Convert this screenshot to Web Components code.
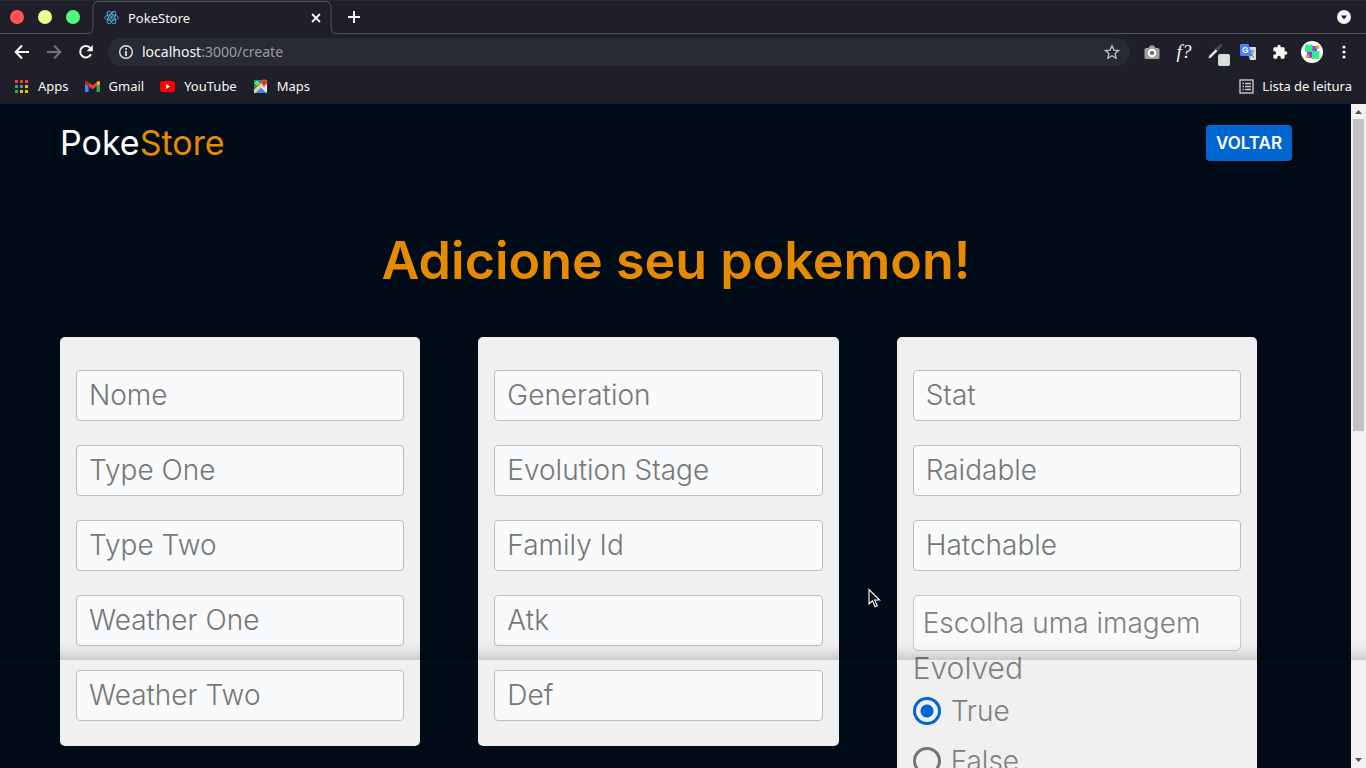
<!DOCTYPE html>
<html lang="pt-BR">
<head>
<meta charset="utf-8">
<title>PokeStore</title>
<style>
body { margin: 0; background: #000c17; }
</style>
</head>
<body>
<browser-window>
  <tab-strip slot="chrome" label="PokeStore"></tab-strip>
  <tool-bar slot="chrome" host="localhost" path=":3000/create"></tool-bar>
  <bookmark-bar slot="chrome"></bookmark-bar>
  <store-page>
    <store-header></store-header>
    <form-card fields="Nome,Type One,Type Two,Weather One,Weather Two" slot="cards"></form-card>
    <form-card fields="Generation,Evolution Stage,Family Id,Atk,Def" slot="cards"></form-card>
    <form-card fields="Stat,Raidable,Hatchable" slot="cards">
      <file-picker label="Escolha uma imagem"></file-picker>
      <radio-set label="Evolved" options="True,False"></radio-set>
    </form-card>
  </store-page>
</browser-window>

<script>
const reset = `
  :host, *, *::before, *::after { box-sizing: border-box; }
  svg { display: block; }
  button { font: inherit; color: inherit; background: none; border: 0; padding: 0; margin: 0; }
  a { color: inherit; text-decoration: none; }
`;
class Base extends HTMLElement {
  connectedCallback() {
    if (this.shadowRoot) return;
    this.attachShadow({ mode: 'open' }).innerHTML = `<style>${reset}${this.css()}</style>${this.html()}`;
  }
}

customElements.define('browser-window', class extends Base {
  css() { return `
    :host { display: flex; flex-direction: column; height: 100vh; overflow: hidden; position: relative;
      background: #1e1f29; color: #f8f8f2; font: 13px/20px "Noto Sans", sans-serif; }
    .view { flex: 1; min-height: 0; display: flex; background: #000c17; }
    .page { flex: 1; min-width: 0; overflow: hidden; }
    .shade { position: absolute; left: 0; right: 0; bottom: 108px; height: 20px; pointer-events: none;
      background: linear-gradient(to bottom, rgba(0,0,0,0), rgba(0,0,0,.04) 50%, rgba(0,0,0,.15)); }
    .cursor { position: absolute; left: 868px; top: 588px; pointer-events: none; }`; }
  html() { return `
    <slot name="chrome"></slot>
    <div class="view"><div class="page"><slot></slot></div><scroll-track></scroll-track></div>
    <div class="shade"></div>
    <svg class="cursor" width="13" height="20" viewBox="0 0 13 20"><path d="M1 1.5V16l3.5-3.2 2.6 6 2.2-1-2.6-5.8h5z" fill="#111" stroke="#fff" stroke-width="1.1"/></svg>`; }
});

customElements.define('scroll-track', class extends Base {
  css() { return `
    :host { display: flex; flex-direction: column; width: 15px; background: #f1f1f1; }
    .thumb { margin: 0 2px; height: 312px; background: #c1c1c1; }
    .space { flex: 1; }`; }
  html() { return `
    <svg width="15" height="15"><path d="M4 10h7L7.500 6z" fill="#505050"/></svg>
    <div class="thumb"></div><div class="space"></div>
    <svg width="15" height="15"><path d="M4 5h7L7.500 9z" fill="#505050"/></svg>`; }
});

customElements.define('tab-strip', class extends Base {
  css() { return `
    :host { display: flex; height: 34px; border-top: 1px solid #282a36; }
    .lights { display: flex; align-items: center; gap: 14px; width: 87px; padding-left: 10px; border-bottom: 1px solid #53555e; }
    .lights i { width: 14px; height: 14px; border-radius: 50%; background: var(--c); }
    .tab { position: relative; display: flex; align-items: center; width: 250px; padding: 0 14px 0 17px; }
    .tab .edge { position: absolute; inset: 0; }
    .name { flex: 1; padding-left: 9px; }
    .rest { flex: 1; display: flex; align-items: center; justify-content: space-between; padding: 0 14px 0 10px; border-bottom: 1px solid #53555e; }`; }
  html() { return `
    <div class="lights"><i style="--c:#ff5555"></i><i style="--c:#f1fa8c"></i><i style="--c:#50fa7b"></i></div>
    <div class="tab">
      <svg class="edge" width="250" height="33"><path d="M0 32.500q6 0 6-6V7q0-6.500 6-6.500h226q6 0 6 6.500v19.500q0 6 6 6" fill="none" stroke="#53555e"/></svg>
      <svg width="15" height="15" viewBox="0 0 15 15" fill="none" stroke="#56b9d2" stroke-width=".9"><ellipse cx="7.500" cy="7.500" rx="6.800" ry="2.700"/><ellipse cx="7.500" cy="7.500" rx="6.800" ry="2.700" transform="rotate(60 7.500 7.500)"/><ellipse cx="7.500" cy="7.500" rx="6.800" ry="2.700" transform="rotate(120 7.500 7.500)"/><circle cx="7.500" cy="7.500" r="1.300" fill="#56b9d2" stroke="none"/></svg>
      <span class="name">${this.getAttribute('label')}</span>
      <button aria-label="Fechar"><svg width="14" height="14"><path d="M3 3l8 8M11 3l-8 8" stroke="#f8f8f2" stroke-width="1.800"/></svg></button>
    </div>
    <div class="rest">
      <button aria-label="Nova guia"><svg width="14" height="14"><path d="M7 1v12M1 7h12" stroke="#f8f8f2" stroke-width="2"/></svg></button>
      <button aria-label="Pesquisar guias"><svg width="16" height="16"><circle cx="8" cy="8" r="7" fill="#f8f8f2"/><path d="M5 6.500h6L8 10.500z" fill="#1e1f29"/></svg></button>
    </div>`; }
});

customElements.define('tool-bar', class extends Base {
  css() { return `
    :host { display: flex; align-items: center; height: 36px; padding: 0 6px; }
    button { display: flex; justify-content: center; align-items: center; width: 32px; height: 28px; flex: none; }
    .omni { flex: 1; display: flex; align-items: center; height: 28px; margin: 0 6px; padding: 0 2px 0 10px; border-radius: 14px; background: #282a36; }
    .url { flex: 1; padding-left: 8px; color: #9a9ba0; font-size: 14px; }
    b { color: #f8f8f2; font-weight: 400; }
    .fn { font: italic 19px/20px "Liberation Serif", serif; }`; }
  html() { return `
    <button aria-label="Voltar"><svg width="16" height="16" fill="none" stroke="#f8f8f2" stroke-width="2"><path d="M15 8H2.500M8 1.500L1.700 8 8 14.500"/></svg></button>
    <button aria-label="Avançar"><svg width="16" height="16" fill="none" stroke="#727379" stroke-width="2"><path d="M1 8h12.500M8 1.500L14.300 8 8 14.500"/></svg></button>
    <button aria-label="Recarregar"><svg width="16" height="16"><path d="M13 10.200A5.700 5.700 0 1 1 12.400 4.200" fill="none" stroke="#f8f8f2" stroke-width="2"/><path d="M14.800 1v6.300H8.500z" fill="#f8f8f2"/></svg></button>
    <div class="omni">
      <svg width="16" height="16"><circle cx="8" cy="8" r="6.300" fill="none" stroke="#e4e4e0" stroke-width="1.400"/><path d="M8 4v1.800M8 7v5" stroke="#e4e4e0" stroke-width="1.800"/></svg>
      <span class="url"><b>${this.getAttribute('host')}</b>${this.getAttribute('path')}</span>
      <button aria-label="Favoritar"><svg width="16" height="16"><path d="M8 1.800l1.900 4.300 4.700.4-3.500 3.100 1 4.600L8 11.800l-4.100 2.400 1-4.600L1.400 6.500l4.700-.4z" fill="none" stroke="#c0c1c0" stroke-width="1.300"/></svg></button>
    </div>
    <button aria-label="Captura"><svg width="16" height="16"><rect x=".5" y="4" width="15" height="11" rx="1.500" fill="#a0a0a0"/><path d="M4.500 4l1.500-2.500h4L11.500 4z" fill="#a0a0a0"/><circle cx="8" cy="9" r="3.300" fill="#777" stroke="#fff" stroke-width="2"/></svg></button>
    <button aria-label="WhatFont"><span class="fn">f?</span></button>
    <button aria-label="Conta-gotas"><svg width="28" height="28"><path d="M7 18l7-7 1.800 1.800-7 7-2.300.5z" fill="#e8e8e4"/><path d="M12.500 10l2-.3L18 6.200q2-.8 2.500 1.300L16.500 12l-.3 2z" fill="#4c4c4c"/><rect x="16" y="16" width="12" height="12" rx="2" fill="#d6dfda"/><circle cx="22" cy="23" r="1" fill="#fff"/></svg></button>
    <button aria-label="Tradutor"><svg width="16" height="16"><path d="M6 3h9q1 0 1 1v11q0 1-1 1h-5z" fill="#d8dade"/><path d="M8.500 7h6M11.500 6v1.500M9.500 13c2-1.500 3.200-3 3.700-5.500M10.500 9c.8 2 2 3.300 3.500 4" fill="none" stroke="#6d7f8c"/><path d="M1 0h7.500L12.500 12H1q-1 0-1-1V1q0-1 1-1z" fill="#4385f5"/><path d="M7.600 4.700A2.500 2.500 0 1 0 8 6.400H5.500" fill="none" stroke="#fff" stroke-width="1.200"/></svg></button>
    <button aria-label="Extensões"><svg width="16" height="16" viewBox="0 0 24 24"><path d="M20.500 11H19V7c0-1.100-.9-2-2-2h-4V3.500a2.500 2.500 0 0 0-5 0V5H4c-1.100 0-2 .9-2 2v3.800h1.500a2.700 2.700 0 0 1 0 5.400H2V20c0 1.100.9 2 2 2h3.800v-1.500a2.700 2.700 0 0 1 5.400 0V22H17c1.100 0 2-.9 2-2v-4h1.500a2.500 2.500 0 0 0 0-5z" fill="#f8f8f2"/></svg></button>
    <button aria-label="Perfil"><svg width="22" height="22"><circle cx="11" cy="11" r="11" fill="#fff"/><path d="M6 11h5v6H6zM11 5h5v6h-5z" fill="#9d3ae0"/><path d="M4 3.500h7.500V11H4zM11 10h7.500v8H11z" fill="#2bf28f"/><circle cx="16.500" cy="6" r="2" fill="#f5a22d"/><circle cx="6.500" cy="15.500" r="2" fill="#f5a22d"/></svg></button>
    <button aria-label="Menu"><svg width="16" height="16" fill="#f8f8f2"><circle cx="8" cy="3" r="1.600"/><circle cx="8" cy="8" r="1.600"/><circle cx="8" cy="13" r="1.600"/></svg></button>`; }
});

customElements.define('bookmark-bar', class extends Base {
  css() { return `
    :host { display: flex; align-items: center; gap: 16px; height: 34px; padding: 0 14px; border-bottom: 2px solid #1c1c27; }
    a { display: flex; align-items: center; gap: 9px; }
    .end { margin-left: auto; gap: 8px; }`; }
  html() {
    const colours = ['#ea4335','#ea4335','#ea4335','#34a853','#4285f4','#fbbc05','#34a853','#fbbc05','#fbbc05'];
    const dots = colours.map((c, i) => `<rect x="${1 + i % 3 * 5}" y="${1 + Math.floor(i / 3) * 5}" width="3" height="3" fill="${c}"/>`).join('');
    return `
    <a href="#"><svg width="15" height="15">${dots}</svg>Apps</a>
    <a href="#"><svg width="15" height="15"><path d="M0 4.500l3.500 2.600V13H1q-1 0-1-1z" fill="#4285f4"/><path d="M11.500 7.100L15 4.500V12q0 1-1 1h-2.500z" fill="#34a853"/><path d="M11.500 3.300l1.300-1Q15 1.500 15 3.500v1.200l-3.500 2.600z" fill="#fbbc04"/><path d="M3.500 3.300l4 3 4-3v4l-4 3-4-3z" fill="#ea4335"/><path d="M3.500 3.300l-1.300-1Q0 1.500 0 3.500v1.200l3.500 2.600z" fill="#c5221f"/></svg>Gmail</a>
    <a href="#"><svg width="15" height="15"><rect y="2" width="15" height="11" rx="2.500" fill="#f00"/><path d="M6 5v5l4-2.500z" fill="#fff"/></svg>YouTube</a>
    <a href="#"><svg width="15" height="15"><rect x="1" y="1" width="13" height="13" rx="1" fill="#e6e8ea"/><path d="M2 1h9L1 11V2q0-1 1-1z" fill="#1f9d5a"/><path d="M2.500 14L8 8.500l5.500 5.500z" fill="#4285f4"/><path d="M1 12L12 1l1.500 1.500L2 14H1z" fill="#fbd03f"/><path d="M11 9Q10.500 6.500 8.700 5a3 3 0 1 1 5 0Q11.500 6.500 11 9z" fill="#ea4335"/><circle cx="11.200" cy="3.300" r="1" fill="#8e2420"/><circle cx="4" cy="4" r="1.400" fill="none" stroke="#fff" stroke-width=".8"/></svg>Maps</a>
    <a href="#" class="end"><svg width="15" height="15" fill="none" stroke="#c8c8c4"><rect x="1" y="1" width="13" height="13" stroke-width="1.400"/><path d="M3.500 4.500H5M6 4.500h6M3.500 7.500H5M6 7.500h6M3.500 10.500H5M6 10.500h6" stroke-width="1.500"/></svg>Lista de leitura</a>`; }
});

customElements.define('store-page', class extends Base {
  css() { return `
    :host { display: block; background: #000c17; color: #808080; font: 300 28px/32px Inter, sans-serif; }
    main { padding: 0 59px 0 60px; }
    h1 { margin: 70px 0 46px; text-align: center; color: #e68a00; font-size: 52px; line-height: 60px; font-weight: 600; }
    form { display: grid; grid-template-columns: repeat(3, minmax(0, 1fr)); gap: 58px; align-items: start; padding-right: 35px; }`; }
  html() { return `<slot></slot><main><h1>Adicione seu pokemon!</h1><form><slot name="cards"></slot></form></main>`; }
});

customElements.define('store-header', class extends Base {
  css() { return `
    :host { display: flex; align-items: center; justify-content: space-between; padding: 21px 59px 0 60px; font-weight: 400; }
    .logo { color: #fff; font-size: 34px; line-height: 36px; }
    .logo span { color: #e68a00; }
    .back { height: 36px; padding: 0 10px; border-radius: 4px; background: #0066d1; color: #fff; font-size: 17px; line-height: 36px; font-weight: 600; box-shadow: 0 1px 4px rgba(0,0,0,.5); }`; }
  html() { return `<a class="logo" href="#">Poke<span>Store</span></a><button class="back">VOLTAR</button>`; }
});

customElements.define('form-card', class extends Base {
  css() { return `
    :host { display: flex; flex-direction: column; padding: 33px 16px 25px; border-radius: 5px; background: #f0f0f0; }
    .fields { display: grid; gap: 24px; }
    input { width: 100%; height: 51px; padding: 0 12px 2px; border: 1px solid #bdbdbd; border-radius: 4px; background: #f8fafc; color: #444; font: inherit; outline: 0; }
    input::placeholder { color: #777; opacity: 1; }`; }
  html() { return `<div class="fields">${this.getAttribute('fields').split(',').map(f => `<input type="text" placeholder="${f}" aria-label="${f}">`).join('')}</div><slot></slot>`; }
});

customElements.define('file-picker', class extends Base {
  css() { return `
    :host { display: block; margin-top: 24px; }
    label { position: relative; display: block; padding: 11px 9px; border: 1px solid #c8c8c8; border-radius: 5px; background: #f8fafc; }
    input { position: absolute; inset: 0; width: 100%; opacity: 0; }`; }
  html() { const l = this.getAttribute('label'); return `<label for="file">${l}<input id="file" type="file"></label>`; }
});

customElements.define('radio-set', class extends Base {
  css() { return `
    :host { display: block; }
    fieldset { margin: 0; padding: 0; border: 0; min-width: 0; }
    legend { padding: 0; font-size: 30px; line-height: 35px; }
    label { display: flex; align-items: center; gap: 10px; height: 50px; }
    input { appearance: none; width: 28px; height: 28px; margin: 0; border: 3px solid #757575; border-radius: 50%; }
    input:checked { border-color: #0066d1; background: radial-gradient(circle, #0066d1 6px, transparent 7px); }`; }
  html() { return `<fieldset><legend>${this.getAttribute('label')}</legend>${this.getAttribute('options').split(',').map((o, i) => `<label><input type="radio" name="r"${i ? '' : ' checked'}>${o}</label>`).join('')}</fieldset>`; }
});
</script>
</body>
</html>
